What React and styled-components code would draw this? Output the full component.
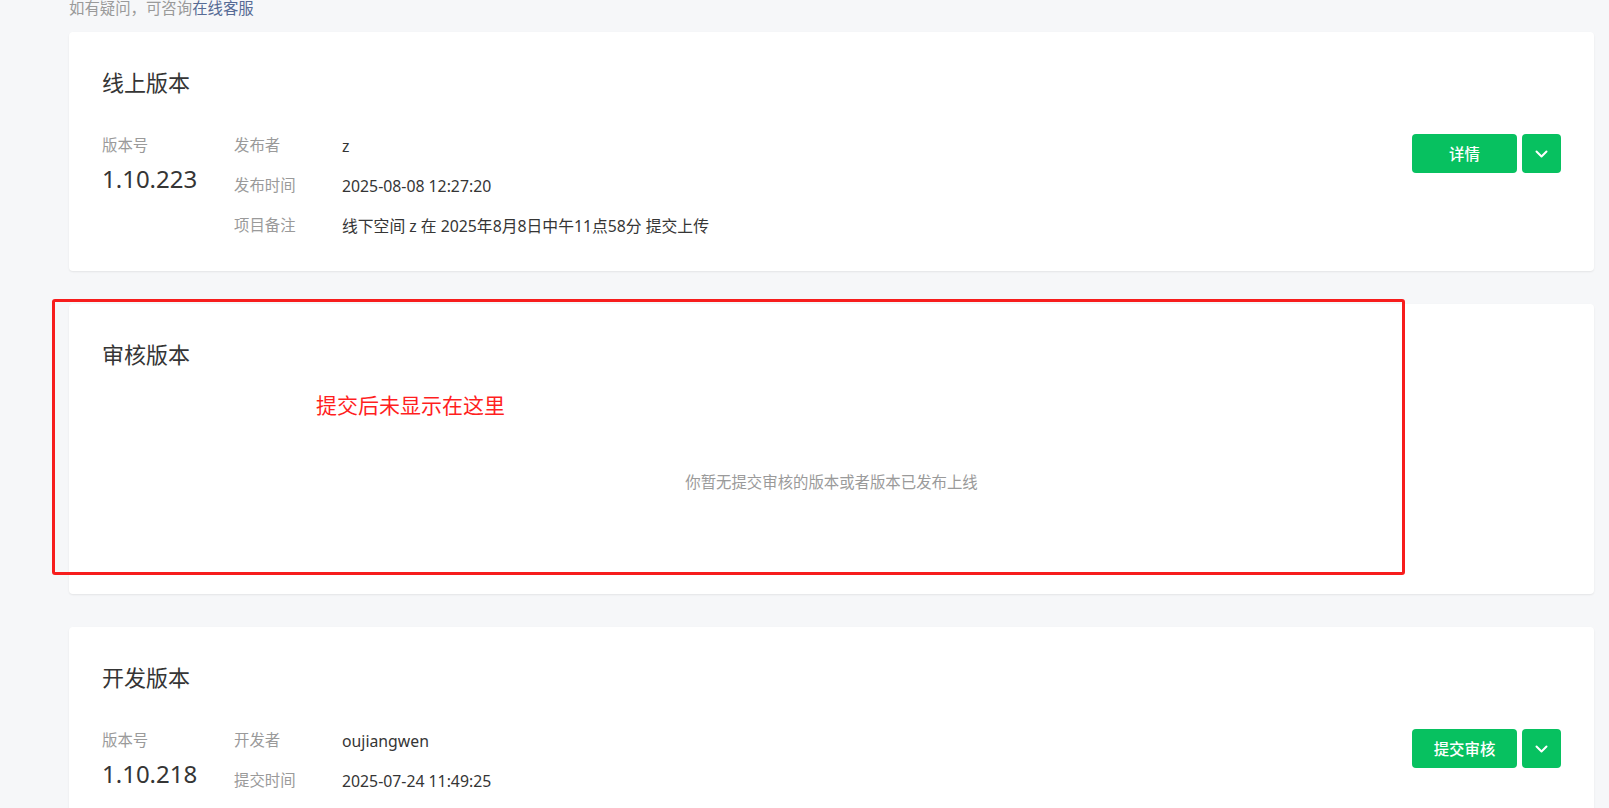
import React from "react";
import styled, { createGlobalStyle } from "styled-components";

const GlobalStyle = createGlobalStyle`
  html, body {
    margin: 0;
    padding: 0;
    background: #f6f7f9;
  }
  body {
    font-family: "Noto Sans", "Noto Sans CJK SC", sans-serif;
    color: #353535;
  }
`;

const Page = styled.div`
  padding: 0 15px 40px 69px;
`;

const Notice = styled.p`
  margin: 0 0 14px;
  font-size: 15.4px;
  line-height: 18px;
  color: #9a9a9a;
  & a {
    color: #576b95;
    text-decoration: none;
  }
`;

const Card = styled.section`
  position: relative;
  background: #fff;
  border-radius: 4px;
  box-shadow: 0 1px 2px rgba(0, 0, 0, 0.08);
  padding: 33px 33px 34px;
  margin-bottom: 33px;
`;

const CardTitle = styled.h2`
  margin: 0;
  font-size: 22px;
  line-height: 35px;
  font-weight: 400;
  color: #353535;
`;

const CardBody = styled.div`
  display: flex;
  align-items: flex-start;
  margin-top: 35px;
`;

const VersionCol = styled.div`
  width: 132px;
  flex-shrink: 0;
`;

const Label = styled.div`
  font-size: 15.4px;
  line-height: 22px;
  color: #9a9a9a;
`;

const VersionNum = styled.div`
  margin-top: 6px;
  font-size: 24px;
  line-height: 32px;
  color: #353535;
`;

const InfoList = styled.div`
  flex: 1;
  display: flex;
  flex-direction: column;
  gap: 18px;
`;

const InfoRow = styled.div`
  display: grid;
  grid-template-columns: 108px auto;
  align-items: center;
  line-height: 22px;
`;

const InfoValue = styled.span`
  font-size: 15.8px;
  color: #353535;
`;

const Actions = styled.div`
  display: flex;
  gap: 5px;
  margin-top: -1px;
`;

const Button = styled.button`
  height: 39px;
  width: ${(props) => (props.square ? "39px" : "105px")};
  padding: 0;
  border: 0;
  border-radius: 4px;
  background: #07c160;
  color: #fff;
  font-family: inherit;
  font-size: 15.4px;
  font-weight: 500;
  display: flex;
  align-items: center;
  justify-content: center;
  cursor: pointer;
`;

const Empty = styled.div`
  height: 188px;
  box-sizing: border-box;
  padding-top: 100px;
  text-align: center;
  font-size: 15.4px;
  line-height: 22px;
  color: #9a9a9a;
`;

const Annotation = styled.div`
  position: absolute;
  left: -17px;
  top: -5px;
  width: 1353px;
  height: 276px;
  box-sizing: border-box;
  border: 3px solid #f71d1d;
  border-radius: 3px;
  pointer-events: none;
`;

const AnnotationText = styled.span`
  position: absolute;
  left: 261px;
  top: 89px;
  font-size: 21px;
  line-height: 28px;
  color: #ff1f1f;
  white-space: nowrap;
`;

function Chevron() {
  return (
    <svg width="13" height="8" viewBox="0 0 13 8" fill="none">
      <path d="M1.5 1.5 L6.5 6.5 L11.5 1.5" stroke="#fff" strokeWidth="2" strokeLinecap="round" strokeLinejoin="round" />
    </svg>
  );
}

function VersionCard({ title, version, rows, action }) {
  return (
    <Card>
      <CardTitle>{title}</CardTitle>
      <CardBody>
        <VersionCol>
          <Label>版本号</Label>
          <VersionNum>{version}</VersionNum>
        </VersionCol>
        <InfoList>
          {rows.map(([label, value]) => (
            <InfoRow key={label}>
              <Label>{label}</Label>
              <InfoValue>{value}</InfoValue>
            </InfoRow>
          ))}
        </InfoList>
        <Actions>
          <Button>{action}</Button>
          <Button square>
            <Chevron />
          </Button>
        </Actions>
      </CardBody>
    </Card>
  );
}

function App() {
  return (
    <>
      <GlobalStyle />
      <Page>
        <Notice>
          如有疑问，可咨询<a href="#">在线客服</a>
        </Notice>

        <VersionCard
          title="线上版本"
          version="1.10.223"
          action="详情"
          rows={[
            ["发布者", "z"],
            ["发布时间", "2025-08-08 12:27:20"],
            ["项目备注", "线下空间 z 在 2025年8月8日中午11点58分 提交上传"],
          ]}
        />

        <Card>
          <CardTitle>审核版本</CardTitle>
          <Empty>你暂无提交审核的版本或者版本已发布上线</Empty>
          <Annotation>
            <AnnotationText>提交后未显示在这里</AnnotationText>
          </Annotation>
        </Card>

        <VersionCard
          title="开发版本"
          version="1.10.218"
          action="提交审核"
          rows={[
            ["开发者", "oujiangwen"],
            ["提交时间", "2025-07-24 11:49:25"],
          ]}
        />
      </Page>
    </>
  );
}

export default App;
